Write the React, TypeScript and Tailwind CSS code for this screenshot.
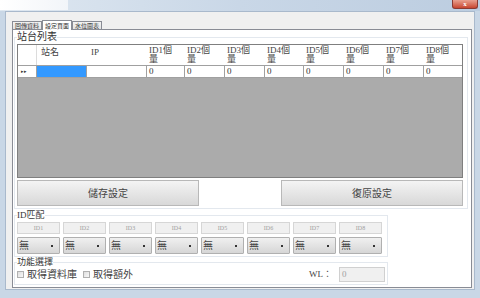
import React from 'react';

const font = { fontFamily: '"Liberation Serif", "Noto Sans CJK TC", serif' };

const columns = ['站名', 'IP', 'ID1', 'ID2', 'ID3', 'ID4', 'ID5', 'ID6', 'ID7', 'ID8'];
const ids = ['ID1', 'ID2', 'ID3', 'ID4', 'ID5', 'ID6', 'ID7', 'ID8'];

const gridCols = 'grid grid-cols-[19px_50px_60px_38px_40px_40px_39px_40px_40px_40px_40px]';

function Tab({ label, active }: { label: string; active?: boolean }) {
  return (
    <div
      className={
        active
          ? 'relative z-10 -mb-px flex h-[10px] items-center border border-b-0 border-[#898c95] bg-white px-[2px] text-[6px] leading-none text-[#333]'
          : 'flex h-[8px] items-center border border-b-0 border-[#898c95] bg-gradient-to-b from-[#f3f3f3] to-[#e3e3e3] px-[2px] text-[6px] leading-none text-[#333]'
      }
    >
      {label}
    </div>
  );
}

function ComboBox() {
  return (
    <div className="flex h-[17px] w-[43px] items-center justify-between rounded-[1px] border border-[#b0b0b0] bg-gradient-to-b from-[#f0f0f0] to-[#d6d6d6] pl-[1px] pr-[6px]">
      <span className="text-[10px] leading-none text-[#444]">無</span>
      <svg width="2" height="2" viewBox="0 0 2 2">
        <rect width="2" height="2" fill="#333" />
      </svg>
    </div>
  );
}

function CheckBox({ label }: { label: string }) {
  return (
    <label className="flex items-center gap-[3px]">
      <span className="block h-[7px] w-[7px] border border-[#b0b0b0] bg-gradient-to-br from-[#dedede] to-[#f8f8f8]" />
      <span className="text-[10px] leading-none text-[#444]">{label}</span>
    </label>
  );
}

export default function App() {
  return (
    <div className="flex h-[298px] w-[480px] flex-col overflow-hidden bg-[#c9d7e6]" style={font}>
      {/* title bar */}
      <div className="flex h-[11px] items-start justify-between bg-gradient-to-r from-[#dfe8f1] via-[#c9d7e7] to-[#bccde0]">
        <div className="h-[10px] w-[68px] bg-gradient-to-r from-white to-[#f2f5f9]" />
        <div className="mr-[2px] flex h-[9px] w-[26px] items-center justify-center rounded-b-[3px] border border-t-0 border-[#8a3b33] bg-gradient-to-b from-[#e8a08f] to-[#c7452f] text-[7px] font-bold leading-none text-white">
          x
        </div>
      </div>

      {/* client area */}
      <div className="mx-[5px] mb-[8px] flex flex-1 flex-col border border-[#a9b9cc] bg-[#f0f0f0] pb-[1px] pl-[6px] pr-[2px] pt-[7px]">
        <div className="flex h-[10px] items-end">
          <Tab label="回傳資料" />
          <Tab label="設定頁面" active />
          <Tab label="水位圖表" />
        </div>

        <div className="flex flex-1 flex-col border border-[#898c95] bg-white px-px">
          {/* 站台列表 */}
          <fieldset className="mr-[2px] mt-[2px] border border-[#e3e8ee] px-[2px] pb-[2px]">
            <legend className="text-[10px] leading-[10px] text-[#333]">站台列表</legend>
            <div className="mt-[2px] w-[446px] border border-[#7f7f7f]">
              <div className={`${gridCols} h-[20px] bg-white`}>
                <div className="border-r border-[#dcdcdc]" />
                {columns.map((c, i) =>
                  i < 2 ? (
                    <div key={c} className="px-[4px] pt-[3px] text-[9px] leading-[9px] text-[#444]">
                      {c}
                    </div>
                  ) : (
                    <div key={c} className="px-[2px] pt-px text-[9px] leading-[9px] text-[#444]">
                      {c}個
                      <br />量
                    </div>
                  )
                )}
              </div>
              <div className={`${gridCols} h-[12px] border-t border-[#a0a0a0] bg-white`}>
                <div className="flex items-center border-r border-[#a0a0a0] pl-[3px] text-[5px] leading-none text-[#333]">
                  ▸▸
                </div>
                <div className="border-r border-[#a0a0a0] bg-[#3399ff]" />
                <div className="border-r border-[#a0a0a0]" />
                {ids.map((id) => (
                  <div key={id} className="border-r border-[#a0a0a0] pl-[2px] text-[9px] leading-[11px] text-[#333] last:border-r-0">
                    0
                  </div>
                ))}
              </div>
              <div className="h-[100px] border-t border-[#a0a0a0] bg-[#ababab]" />
            </div>
            <div className="mt-[2px] flex w-[446px] justify-between">
              <button className="h-[26px] w-[182px] border border-[#b8b8b8] bg-gradient-to-b from-[#f4f4f4] to-[#d8d8d8] text-[10px] text-[#444]">
                儲存設定
              </button>
              <button className="h-[26px] w-[182px] border border-[#b8b8b8] bg-gradient-to-b from-[#f4f4f4] to-[#d8d8d8] text-[10px] text-[#444]">
                復原設定
              </button>
            </div>
          </fieldset>

          {/* ID匹配 */}
          <fieldset className="mt-[2px] w-[374px] border border-[#e3e8ee] px-[2px] pb-[2px]">
            <legend className="text-[9px] leading-[9px] text-[#333]">ID匹配</legend>
            <div className="mt-[2px] flex gap-[3px]">
              {ids.map((id) => (
                <div
                  key={id}
                  className="flex h-[12px] w-[43px] items-center justify-center border border-[#d6d6d6] bg-[#f0f0f0] text-[6px] leading-none text-[#a0a0a0]"
                >
                  {id}
                </div>
              ))}
            </div>
            <div className="mt-[3px] flex gap-[3px]">
              {ids.map((id) => (
                <ComboBox key={id} />
              ))}
            </div>
          </fieldset>

          {/* 功能選擇 */}
          <fieldset className="mt-[1px] w-[374px] border border-[#e3e8ee] px-[2px] pb-[2px]">
            <legend className="text-[9px] leading-[9px] text-[#333]">功能選擇</legend>
            <div className="flex h-[15px] items-center">
              <div className="flex items-center gap-[6px]">
                <CheckBox label="取得資料庫" />
                <CheckBox label="取得額外" />
              </div>
              <span className="ml-auto mr-[7px] text-[9px] leading-none text-[#444]">WL：</span>
              <div className="flex h-[15px] w-[46px] items-center border border-[#d0d0d0] bg-[#f0f0f0] pl-[2px] text-[9px] leading-none text-[#a0a0a0]">
                0
              </div>
            </div>
          </fieldset>
        </div>
      </div>
    </div>
  );
}
